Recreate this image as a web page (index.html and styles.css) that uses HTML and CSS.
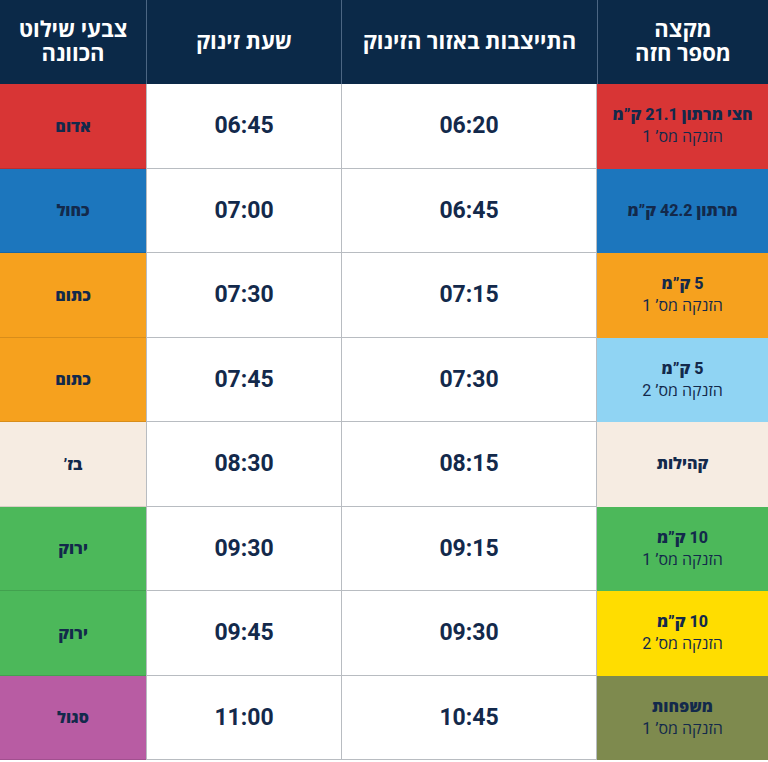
FILE: index.html
```html
<!DOCTYPE html>
<html lang="he" dir="rtl">
<head>
<meta charset="utf-8">
<title>לוח זינוקים</title>
<link rel="stylesheet" href="styles.css">
</head>
<body>
<div class="schedule">
  <div class="cell head">מקצה<br>מספר חזה</div>
  <div class="cell head">התייצבות באזור הזינוק</div>
  <div class="cell head">שעת זינוק</div>
  <div class="cell head">צבעי שילוט<br>הכוונה</div>

  <div class="cell race red"><b>חצי מרתון 21.1 ק”מ</b><span>הזנקה מס’ 1</span></div>
  <div class="cell time mid">06:20</div>
  <div class="cell time">06:45</div>
  <div class="cell sign red">אדום</div>

  <div class="cell race blue"><b>מרתון 42.2 ק”מ</b></div>
  <div class="cell time mid">06:45</div>
  <div class="cell time">07:00</div>
  <div class="cell sign blue">כחול</div>

  <div class="cell race orange"><b>5 ק”מ</b><span>הזנקה מס’ 1</span></div>
  <div class="cell time mid">07:15</div>
  <div class="cell time">07:30</div>
  <div class="cell sign orange">כתום</div>

  <div class="cell race sky"><b>5 ק”מ</b><span>הזנקה מס’ 2</span></div>
  <div class="cell time mid">07:30</div>
  <div class="cell time">07:45</div>
  <div class="cell sign orange">כתום</div>

  <div class="cell race beige"><b>קהילות</b></div>
  <div class="cell time mid">08:15</div>
  <div class="cell time">08:30</div>
  <div class="cell sign beige">בז’</div>

  <div class="cell race green"><b>10 ק”מ</b><span>הזנקה מס’ 1</span></div>
  <div class="cell time mid">09:15</div>
  <div class="cell time">09:30</div>
  <div class="cell sign green">ירוק</div>

  <div class="cell race yellow"><b>10 ק”מ</b><span>הזנקה מס’ 2</span></div>
  <div class="cell time mid">09:30</div>
  <div class="cell time">09:45</div>
  <div class="cell sign green">ירוק</div>

  <div class="cell race olive"><b>משפחות</b><span>הזנקה מס’ 1</span></div>
  <div class="cell time mid">10:45</div>
  <div class="cell time">11:00</div>
  <div class="cell sign purple">סגול</div>
</div>
</body>
</html>
```

FILE: styles.css
```css
html, body {
  margin: 0;
  padding: 0;
  background: #ffffff;
}

body {
  font-family: Roboto, "Open Sans", "Liberation Sans", sans-serif;
  color: #13294b;
}

.schedule {
  direction: rtl;
  width: 768px;
  display: grid;
  grid-template-columns: 171px 256px 195px 146px;
  grid-template-rows: 84px repeat(8, 84.5px);
}

.cell {
  box-sizing: border-box;
  display: flex;
  flex-direction: column;
  align-items: center;
  justify-content: center;
  text-align: center;
}

.head {
  background: #0b2948;
  color: #ffffff;
  font-weight: 700;
  font-size: 22px;
  line-height: 24px;
  border-left: 1px solid #4c6683;
}

.head:nth-child(4) {
  border-left: none;
}

.time {
  background: #ffffff;
  font-size: 23px;
  font-weight: 700;
  border-bottom: 1px solid #b8bcc1;
  border-left: 1px solid #b8bcc1;
}

.time.mid {
  border-right: 1px solid #b8bcc1;
}

.sign {
  font-size: 16px;
  font-weight: 800;
  border-bottom: 1px solid rgba(0, 0, 0, 0.12);
}

.race {
  font-size: 16px;
  line-height: 22px;
}

.race b {
  font-weight: 800;
}

.race span {
  font-weight: 400;
}

.red { background: #d83535; }
.blue { background: #1c76bd; }
.orange { background: #f6a11e; }
.sky { background: #90d4f3; }
.beige { background: #f6ece2; }
.green { background: #4cb85a; }
.yellow { background: #ffdd00; }
.olive { background: #7e8a4e; }
.purple { background: #b85ca3; }
```
